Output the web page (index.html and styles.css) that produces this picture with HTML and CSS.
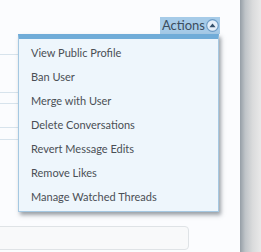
FILE: index.html
```html
<!DOCTYPE html>
<html>
<head>
<meta charset="utf-8">
<link rel="stylesheet" href="styles.css">
</head>
<body>
<div class="page">
  <div class="main">
    <div class="rows">
      <div class="row r1"></div>
      <div class="row r2"></div>
      <div class="row r3"></div>
      <div class="row r4"></div>
      <div class="row r5"></div>
    </div>
    <div class="input"></div>
    <div class="popup">
      <div class="control">
        <span class="label">Actions</span>
        <svg class="arrow" width="13" height="13" viewBox="0 0 13 13"><circle cx="6.5" cy="6.5" r="5.8" fill="#e4eef8" stroke="#6d9cc6" stroke-width="1.2"/><path d="M3.4 8.2 L6.5 4.6 L9.6 8.2 Z" fill="#34506a"/></svg>
      </div>
      <ul class="menu">
        <li>View Public Profile</li>
        <li>Ban User</li>
        <li>Merge with User</li>
        <li>Delete Conversations</li>
        <li>Revert Message Edits</li>
        <li>Remove Likes</li>
        <li>Manage Watched Threads</li>
      </ul>
    </div>
  </div>
  <div class="side"></div>
</div>
</body>
</html>
```
FILE: styles.css
```css
html, body {
  margin: 0;
  padding: 0;
}
body {
  background: #fbfcfe;
  font-family: Lato, "Open Sans", sans-serif;
  width: 261px;
  height: 252px;
  overflow: hidden;
}
.page {
  display: flex;
  height: 252px;
}
.main {
  position: relative;
  width: 240px;
  height: 252px;
}
.side {
  width: 21px;
  height: 252px;
  background: linear-gradient(to right, #959ea6 0%, #bfc4c8 25%, #dadbdc 60%, #e9e9e9 100%);
}
.rows {
  padding-top: 54px;
  display: flex;
  flex-direction: column;
}
.row {
  border-top: 1px solid #d7e3ec;
  width: 200px;
}
.r1 { height: 37px; }
.r2 { height: 10px; }
.r3 { height: 23px; }
.r4 { height: 11px; }
.r5 { height: 0; }
.input {
  position: absolute;
  left: -6px;
  top: 226px;
  width: 193px;
  height: 22px;
  border: 1px solid #dfe3e6;
  border-radius: 4px;
  background: #f8f9fa;
}
.popup {
  position: absolute;
  left: 18px;
  top: 17px;
  width: 201px;
  display: flex;
  flex-direction: column;
  align-items: flex-end;
}
.control {
  display: flex;
  align-items: center;
  gap: 1px;
  background: #a6cbe8;
  padding: 1px 1px 1px 2px;
  height: 15px;
  margin-right: -1px;
}
.label {
  font-size: 13px;
  color: #3b4d5e;
  line-height: 15px;
}
.arrow {
  display: block;
}
.menu {
  list-style: none;
  margin: 0;
  padding: 2px 0 2px 0;
  width: 199px;
  background: #eef6fc;
  border: 1px solid #a5c8e2;
  border-top: 5px solid #70acd8;
  box-shadow: 2px 3px 4px rgba(60, 70, 80, 0.5);
}
.menu li {
  font-size: 11px;
  color: #4a4f55;
  line-height: 24px;
  height: 24px;
  padding-left: 12px;
}
```
